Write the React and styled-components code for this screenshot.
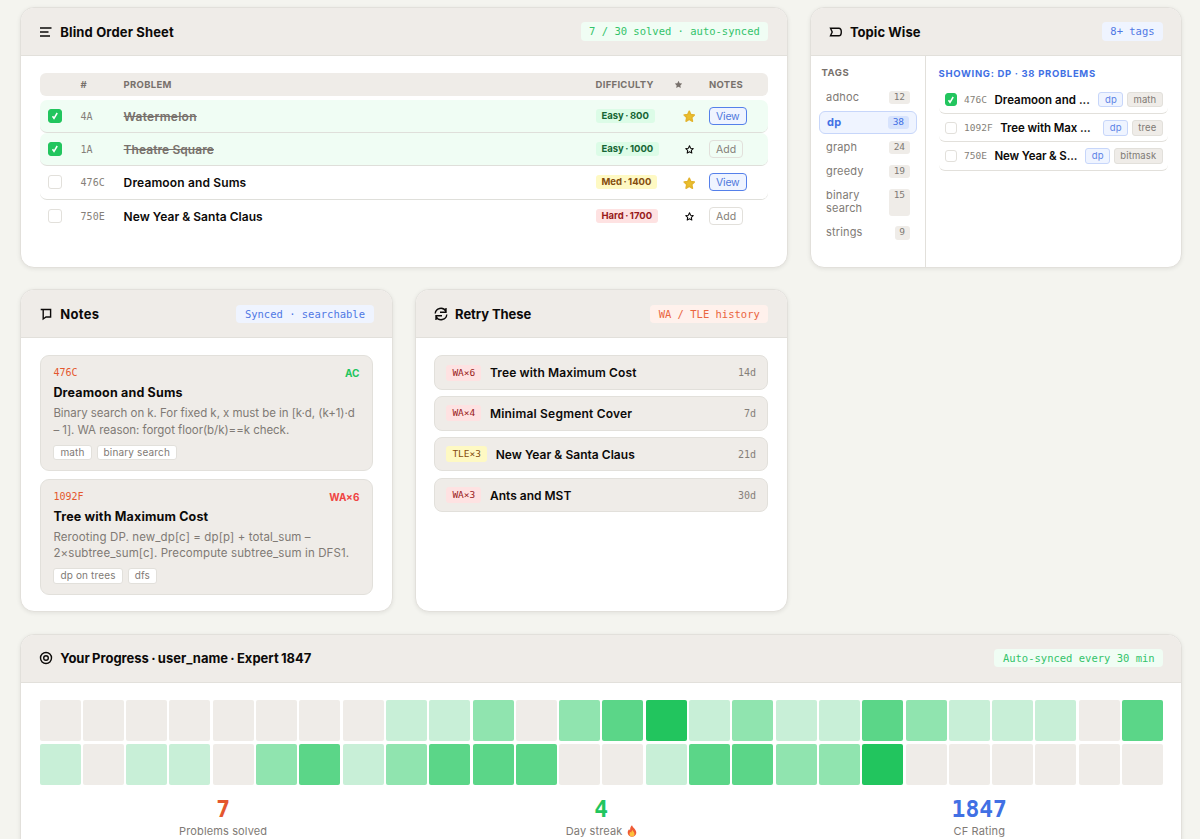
import React from 'react';
import styled, { createGlobalStyle, css } from 'styled-components';

const GlobalStyle = createGlobalStyle`
  * {
    box-sizing: border-box;
  }
  body {
    margin: 0;
    height: 839px;
    overflow: hidden;
    background: #f4f4ef;
    font-family: Inter, "Open Sans", sans-serif;
    color: #0c0a09;
  }
`;

const mono = css`
  font-family: "DejaVu Sans Mono", "Liberation Mono", monospace;
`;

const tones = {
  green: { fg: '#33c36a', bg: '#f0fdf4' },
  blue: { fg: '#4f78e4', bg: '#eff4ff' },
  orange: { fg: '#ea6540', bg: '#fff1ec' },
};

const levels = ['#efece8', '#c8efd7', '#90e4af', '#5bd688', '#22c55e'];

const Page = styled.main`
  display: grid;
  grid-template-columns: repeat(3, 1fr);
  grid-template-rows: 260.5px 322.5px 260px;
  gap: 21.8px 22px;
  width: 1162.4px;
  margin: 7px 0 0 20px;
`;

const Card = styled.section`
  grid-column: span ${(p) => p.$span || 1};
  display: flex;
  flex-direction: column;
  background: #fff;
  border: 1px solid #e2e0db;
  border-radius: 14px;
  overflow: hidden;
  box-shadow: 0 1px 4px rgba(0, 0, 0, 0.08);
`;

const CardHeader = styled.header`
  display: flex;
  align-items: center;
  flex: none;
  height: 48px;
  padding: 0 18.3px;
  background: #efece8;
  border-bottom: 1px solid #e2e0db;

  svg {
    flex: none;
    width: 14px;
    height: 14px;
    margin-right: 7px;
  }
  h2 {
    flex: 1;
    margin: 0;
    font-size: 13px;
    font-weight: 700;
    letter-spacing: ${(p) => p.$track || 0}px;
    word-spacing: ${(p) => p.$words || 0}px;
    white-space: nowrap;
  }
`;

const Pill = styled.span`
  ${mono}
  height: 18.5px;
  padding: 0 8.5px;
  border-radius: 4px;
  font-size: 10.5px;
  line-height: 18px;
  white-space: pre;
  color: ${(p) => tones[p.$tone].fg};
  background: ${(p) => tones[p.$tone].bg};
`;

const Body = styled.div`
  flex: 1;
  padding: 17px 18.6px;
`;

const grid = css`
  display: grid;
  grid-template-columns: 33px 43px 1fr 78.5px 35px 59px;
  align-items: center;
  padding-left: 8px;
`;

const TableHead = styled.div`
  ${grid}
  height: 23px;
  margin-bottom: 4px;
  border-radius: 6px;
  background: #efece8;
  color: #78716c;
  font-size: 9.5px;
  font-weight: 700;
  letter-spacing: 0.3px;
`;

const TableRow = styled.div`
  ${grid}
  height: 33.2px;
  border-radius: 7px;
  border-bottom: ${(p) => (p.$last ? 0 : '1px solid #dfdfda')};
  background: ${(p) => (p.$solved ? '#f0fdf4' : '#fff')};
`;

const Box = styled.span`
  display: flex;
  flex: none;
  align-items: center;
  justify-content: center;
  width: ${(p) => p.$size || 14}px;
  height: ${(p) => p.$size || 14}px;
  border: 1px solid ${(p) => (p.$on ? '#22c55e' : '#e2e0db')};
  border-radius: 3px;
  background: ${(p) => (p.$on ? '#22c55e' : '#fff')};
`;

const Code = styled.span`
  ${mono}
  color: #857f79;
  font-size: 10px;
`;

const Name = styled.span`
  font-size: 12px;
  font-weight: 600;
  letter-spacing: ${(p) => p.$track || 0}px;
  white-space: nowrap;
  ${(p) =>
    p.$solved &&
    css`
      color: #78716c;
      text-decoration: line-through;
    `}
`;

const difficulty = {
  Easy: { fg: '#166534', bg: '#dcfce7' },
  Med: { fg: '#854d0e', bg: '#fef9c3' },
  Hard: { fg: '#991b1b', bg: '#fee2e2' },
};

const Difficulty = styled.span`
  justify-self: start;
  height: 14px;
  padding: 0 6px;
  border-radius: 3px;
  font-size: 9.5px;
  font-weight: 700;
  line-height: 14px;
  word-spacing: -0.8px;
  white-space: nowrap;
  color: ${(p) => difficulty[p.$level].fg};
  background: ${(p) => difficulty[p.$level].bg};
`;

const Star = styled.span`
  display: flex;
  justify-content: center;
  padding: 1px 5px 0 0;
`;

const NoteButton = styled.button`
  justify-self: start;
  height: 18px;
  padding: 0 6px;
  border: 1px solid ${(p) => (p.$view ? '#5580ea' : '#e2e0db')};
  border-radius: 4px;
  background: ${(p) => (p.$view ? '#eff4ff' : 'transparent')};
  color: ${(p) => (p.$view ? '#4f78dc' : '#857f79')};
  font-family: inherit;
  font-size: 10.5px;
  line-height: 15px;
  letter-spacing: ${(p) => (p.$view ? -0.2 : 0.1)}px;
`;

const Split = styled.div`
  display: flex;
  flex: 1;
`;

const TagList = styled.div`
  width: 115.5px;
  padding: 11px 8px 0;
  border-right: 1px solid #e2e0db;
`;

const TagTitle = styled.h3`
  margin: 0 0 8px 3px;
  color: #78716c;
  font-size: 9.5px;
  font-weight: 700;
  line-height: 12px;
  letter-spacing: 0.5px;
`;

const Tag = styled.div`
  display: flex;
  justify-content: space-between;
  margin-bottom: 2.7px;
  padding: 4px 7.5px;
  border: ${(p) => (p.$active ? '1px solid #c7d6fa' : '0')};
  border-radius: 6px;
  background: ${(p) => (p.$active ? '#eff4ff' : 'transparent')};
  color: ${(p) => (p.$active ? '#4170e4' : '#807a75')};
  font-size: 11px;
  font-weight: ${(p) => (p.$active ? 700 : 400)};
  letter-spacing: 0.15px;
  line-height: 13.3px;

  span {
    ${mono}
    padding: 0 4.5px;
    border-radius: 3px;
    background: ${(p) => (p.$active ? '#d7e3fd' : '#efece8')};
    font-size: 9.5px;
    font-weight: 400;
    letter-spacing: 0;
    line-height: 12px;
  }
`;

const TopicMain = styled.div`
  flex: 1;
  min-width: 0;
  padding: 10.5px 13px 0 12.5px;

  h3 {
    margin: 0 0 6.5px;
    color: #4170e4;
    font-size: 9.5px;
    font-weight: 700;
    line-height: 13px;
    letter-spacing: 0.68px;
    white-space: nowrap;
  }
`;

const TopicRow = styled.div`
  display: flex;
  align-items: center;
  height: 28.2px;
  padding: 0 5.5px 0 6px;
  border-bottom: 1px solid #e2e0db;
  border-radius: 6px;

  ${Code} {
    margin: 0 7.5px 0 7px;
    font-size: 9.5px;
  }
  ${Name} {
    flex: 1;
    font-size: 11.5px;
  }
`;

const Chip = styled.span`
  flex: none;
  height: 15.5px;
  margin-left: ${(p) => p.$gap ?? 3.5}px;
  padding: 0 5.5px;
  border: 1px solid ${(p) => (p.$blue ? '#c7d6fa' : '#e2e0db')};
  border-radius: 3px;
  background: ${(p) => (p.$blue ? '#eff4ff' : p.$white ? '#fff' : '#efece8')};
  color: ${(p) => (p.$blue ? '#5b82e6' : '#807a75')};
  font-size: ${(p) => (p.$white ? 10 : 9.5)}px;
  line-height: 13px;
  letter-spacing: 0.15px;
`;

const NoteCard = styled.article`
  height: 116px;
  margin-bottom: 7.5px;
  padding: 10px 12.8px;
  border: 1px solid #e2e0db;
  border-radius: 9px;
  background: #efece8;

  h3 {
    margin: 4px 0 4px;
    font-size: 12.5px;
    font-weight: 700;
    line-height: 17px;
    letter-spacing: 0.17px;
  }
  p {
    margin: 0 0 6.5px;
    color: #807a75;
    font-size: 11.5px;
    line-height: 16.5px;
    letter-spacing: ${(p) => p.$track}px;
    white-space: pre;
  }
`;

const NoteTop = styled.div`
  display: flex;
  justify-content: space-between;
  ${mono}
  color: #e4572e;
  font-size: 10px;
  line-height: 14px;

  b {
    font-family: Inter, sans-serif;
    color: ${(p) => (p.$ok ? '#22c55e' : '#ef4444')};
  }
`;

const ChipLine = styled.div`
  display: flex;
  gap: 5px;

  ${Chip} {
    padding: 0 6px;
  }
`;

const RetryRow = styled.div`
  display: flex;
  align-items: center;
  height: 34.5px;
  margin-bottom: 6.35px;
  padding: 0 11px;
  border: 1px solid #e2e0db;
  border-radius: 8px;
  background: #efece8;

  ${Name} {
    flex: 1;
  }
`;

const Verdict = styled.span`
  ${mono}
  height: 16px;
  margin-right: 8.7px;
  padding: 0 6px;
  border-radius: 3px;
  background: ${(p) => (p.$tle ? '#fef9c3' : '#fee2e2')};
  color: ${(p) => (p.$tle ? '#854d0e' : '#991b1b')};
  font-size: 9.5px;
  line-height: 16px;
`;

const Heatmap = styled.div`
  display: grid;
  grid-template-columns: repeat(26, 1fr);
  gap: 3px 2.3px;
`;

const Cell = styled.i`
  aspect-ratio: 1;
  border-radius: 2px;
  background: ${(p) => levels[p.$level]};
`;

const Stats = styled.div`
  display: grid;
  grid-template-columns: repeat(3, 1fr);
  gap: 11px;
  margin-top: 10px;
  text-align: center;
`;

const Stat = styled.div`
  color: #807a75;
  font-size: 11px;
  letter-spacing: 0.13px;
  line-height: 17px;

  strong {
    ${mono}
    display: block;
    color: ${(p) => p.$color};
    font-size: 23px;
    letter-spacing: 0;
    line-height: 28.5px;
  }
  svg {
    margin-left: 1px;
    vertical-align: -2px;
  }
`;

const Stroke = ({ children }) => (
  <svg viewBox="0 0 14 14" fill="none" stroke="#0c0a09" strokeWidth="1.4">
    {children}
  </svg>
);

const ListIcon = () => (
  <Stroke>
    <path d="M1 3h11.500M1 7h8.500M1 11h10" />
  </Stroke>
);

const TagIcon = () => (
  <Stroke>
    <path d="M1.500 3.200h8.300c1.600 0 2.500 1.300 2.500 3.800s-.9 3.800-2.500 3.800H1.500L3.200 7z" />
  </Stroke>
);

const NoteIcon = () => (
  <Stroke>
    <path d="M1.700 2.500h9.900v7.500H7l-2.800 2V2.500" />
  </Stroke>
);

const RetryIcon = () => (
  <Stroke>
    <path d="M1.200 6.500A5.700 5.700 0 0 1 11.800 4.200M12.800 7.500A5.700 5.700 0 0 1 2.200 9.800M12 1v4.200H6M2 13V8.800h6" />
  </Stroke>
);

const TargetIcon = () => (
  <Stroke>
    <circle cx="7" cy="7" r="5.5" />
    <circle cx="7" cy="7" r="2.3" />
  </Stroke>
);

const STAR = 'M6 .7l1.650 3.500 3.700.5-2.700 2.650.7 3.850L6 9.350 2.650 11.200l.7-3.850L.65 4.700l3.700-.5z';

const StarIcon = ({ size, fill, stroke }) => (
  <svg width={size} height={size} viewBox="-.5 -.5 13 13">
    <path d={STAR} fill={fill} stroke={stroke} strokeWidth="1.5" strokeLinejoin="round" />
  </svg>
);

const Flame = () => (
  <svg width="10" height="12" viewBox="0 0 10 12">
    <path d="M5 .3C5.600 2.500 9.300 4.500 9.300 7.700a4.300 4 0 0 1-8.600 0C.7 6 1.500 4.700 2.300 4c.1 1 .5 1.300.8 1.400C3 3.500 3.500 1.500 5 .3z" fill="#ee5a35" />
    <path d="M5.500 5c.3 1.300 2 1.900 2 3.900a2.500 2.500 0 0 1-5 0c0-1 .5-1.700 1-2.100.2.6.6.8.9.8C4.300 6.600 4.700 5.700 5.500 5z" fill="#fdc13c" />
  </svg>
);

const Check = ({ on, size }) => (
  <Box $on={on} $size={size}>
    {on && (
      <svg width="8" height="8" viewBox="0 0 8 8" fill="none" stroke="#fff" strokeWidth="1.5">
        <path d="M1.500 4.300l1.500 2L6.200 1" />
      </svg>
    )}
  </Box>
);

const problems = [
  { id: '4A', name: 'Watermelon', level: 'Easy', rating: 800, solved: true, starred: true, track: 0.3 },
  { id: '1A', name: 'Theatre Square', level: 'Easy', rating: 1000, solved: true, track: 0.07 },
  { id: '476C', name: 'Dreamoon and Sums', level: 'Med', rating: 1400, starred: true, track: 0.14 },
  { id: '750E', name: 'New Year & Santa Claus', level: 'Hard', rating: 1700, track: 0.03 },
];

const tags = [
  ['adhoc', 12],
  ['dp', 38],
  ['graph', 24],
  ['greedy', 19],
  ['binary search', 15],
  ['strings', 9],
];

const topicProblems = [
  { id: '476C', name: 'Dreamoon and ...', tag: 'math', solved: true, track: 0.02 },
  { id: '1092F', name: 'Tree with Max ...', tag: 'tree', track: -0.1 },
  { id: '750E', name: 'New Year & S...', tag: 'bitmask', track: -0.15 },
];

const notes = [
  {
    id: '476C',
    verdict: 'AC',
    ok: true,
    name: 'Dreamoon and Sums',
    text: 'Binary search on k. For fixed k, x must be in [k·d, (k+1)·d\n– 1]. WA reason: forgot floor(b/k)==k check.',
    track: -0.05,
    tags: ['math', 'binary search'],
  },
  {
    id: '1092F',
    verdict: 'WA×6',
    name: 'Tree with Maximum Cost',
    text: 'Rerooting DP. new_dp[c] = dp[p] + total_sum –\n2×subtree_sum[c]. Precompute subtree_sum in DFS1.',
    track: 0.11,
    tags: ['dp on trees', 'dfs'],
  },
];

const retries = [
  { verdict: 'WA×6', name: 'Tree with Maximum Cost', age: '14d', track: 0.13 },
  { verdict: 'WA×4', name: 'Minimal Segment Cover', age: '7d', track: 0.2 },
  { verdict: 'TLE×3', name: 'New Year & Santa Claus', age: '21d', track: 0.03 },
  { verdict: 'WA×3', name: 'Ants and MST', age: '30d', track: 0 },
];

const activity = '00000000112023412113211103' + '10110231233300133224000000';

function App() {
  return (
    <>
      <GlobalStyle />
      <Page>
        <Card $span={2}>
          <CardHeader $track={0.14}>
            <ListIcon />
            <h2>Blind Order Sheet</h2>
            <Pill $tone="green">7 / 30 solved · auto-synced</Pill>
          </CardHeader>
          <Body>
            <TableHead>
              <span />
              <span>#</span>
              <span>PROBLEM</span>
              <span>DIFFICULTY</span>
              <StarIcon size={9} fill="#78716c" />
              <span>NOTES</span>
            </TableHead>
            {problems.map((p, i) => (
              <TableRow key={p.id} $solved={p.solved} $last={i === problems.length - 1}>
                <Check on={p.solved} />
                <Code>{p.id}</Code>
                <Name $solved={p.solved} $track={p.track}>{p.name}</Name>
                <Difficulty $level={p.level}>{p.level} · {p.rating}</Difficulty>
                <Star>
                  {p.starred ? (
                    <StarIcon size={12.5} fill="#eabf2d" stroke="#e3b32c" />
                  ) : (
                    <StarIcon size={9} fill="none" stroke="#0c0a09" />
                  )}
                </Star>
                <NoteButton $view={p.starred}>{p.starred ? 'View' : 'Add'}</NoteButton>
              </TableRow>
            ))}
          </Body>
        </Card>

        <Card>
          <CardHeader $track={0.05}>
            <TagIcon />
            <h2>Topic Wise</h2>
            <Pill $tone="blue">8+ tags</Pill>
          </CardHeader>
          <Split>
            <TagList>
              <TagTitle>TAGS</TagTitle>
              {tags.map(([name, count]) => (
                <Tag key={name} $active={name === 'dp'}>
                  {name}
                  <span>{count}</span>
                </Tag>
              ))}
            </TagList>
            <TopicMain>
              <h3>SHOWING: DP · 38 PROBLEMS</h3>
              {topicProblems.map((p) => (
                <TopicRow key={p.id}>
                  <Check on={p.solved} size={12.5} />
                  <Code>{p.id}</Code>
                  <Name $track={p.track}>{p.name}</Name>
                  <Chip $blue $gap={0}>dp</Chip>
                  <Chip>{p.tag}</Chip>
                </TopicRow>
              ))}
            </TopicMain>
          </Split>
        </Card>

        <Card>
          <CardHeader $track={0.3}>
            <NoteIcon />
            <h2>Notes</h2>
            <Pill $tone="blue">Synced · searchable</Pill>
          </CardHeader>
          <Body>
            {notes.map((n) => (
              <NoteCard key={n.id} $track={n.track}>
                <NoteTop $ok={n.ok}>
                  {n.id}
                  <b>{n.verdict}</b>
                </NoteTop>
                <h3>{n.name}</h3>
                <p>{n.text}</p>
                <ChipLine>
                  {n.tags.map((t) => (
                    <Chip key={t} $white $gap={0}>{t}</Chip>
                  ))}
                </ChipLine>
              </NoteCard>
            ))}
          </Body>
        </Card>

        <Card>
          <CardHeader $track={-0.08}>
            <RetryIcon />
            <h2>Retry These</h2>
            <Pill $tone="orange">WA / TLE history</Pill>
          </CardHeader>
          <Body>
            {retries.map((r) => (
              <RetryRow key={r.name}>
                <Verdict $tle={r.verdict.startsWith('TLE')}>{r.verdict}</Verdict>
                <Name $track={r.track}>{r.name}</Name>
                <Code>{r.age}</Code>
              </RetryRow>
            ))}
          </Body>
        </Card>

        <Card $span={3}>
          <CardHeader $words={-0.8}>
            <TargetIcon />
            <h2>Your Progress · user_name · Expert 1847</h2>
            <Pill $tone="green">Auto-synced every 30 min</Pill>
          </CardHeader>
          <Body>
            <Heatmap>
              {[...activity].map((level, i) => (
                <Cell key={i} $level={level} />
              ))}
            </Heatmap>
            <Stats>
              <Stat $color="#e4572e">
                <strong>7</strong>
                Problems solved
              </Stat>
              <Stat $color="#22c55e">
                <strong>4</strong>
                Day streak <Flame />
              </Stat>
              <Stat $color="#4170e4">
                <strong>1847</strong>
                CF Rating
              </Stat>
            </Stats>
          </Body>
        </Card>
      </Page>
    </>
  );
}

export default App;
